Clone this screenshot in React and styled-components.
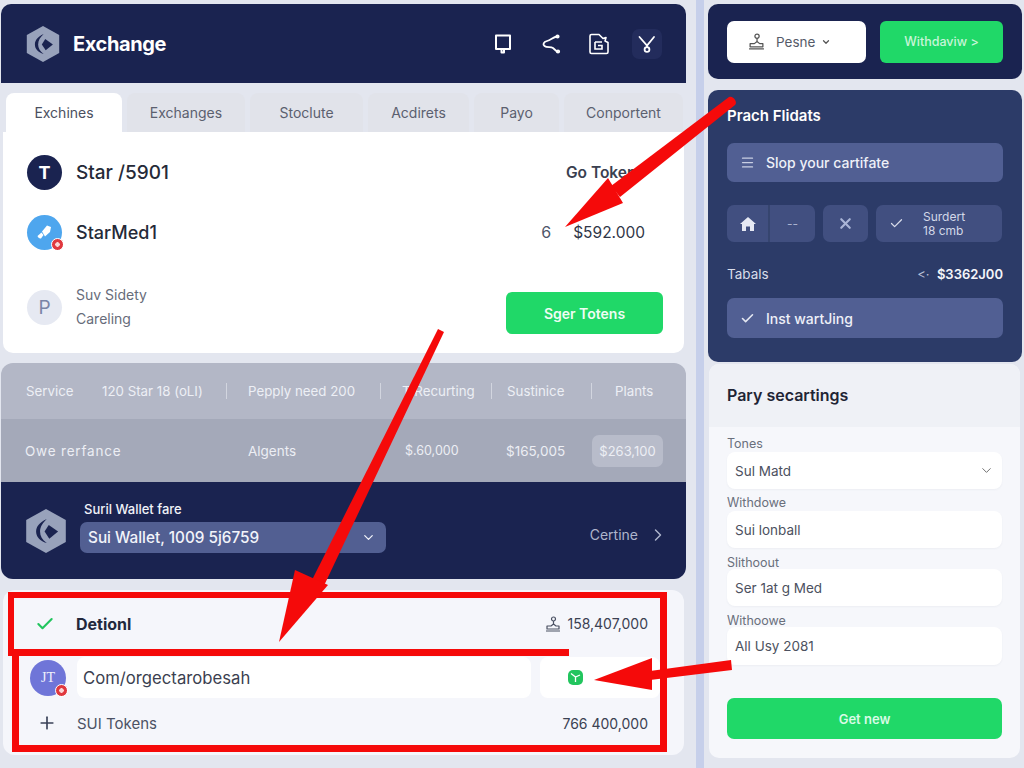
import styled, { createGlobalStyle } from "styled-components";
import { Check, ChevronDown, ChevronRight, Plus, X, Menu } from "lucide-react";

const GlobalStyle = createGlobalStyle`
  html, body { margin: 0; padding: 0; }
  body { background: #e3e6ef; font-family: Inter, "Liberation Sans", sans-serif; overflow: hidden; }
  * { box-sizing: border-box; }
`;

const tabs = [
  { label: "Exchines", width: 116, active: true },
  { label: "Exchanges", width: 118 },
  { label: "Stoclute", width: 113 },
  { label: "Acdirets", width: 101 },
  { label: "Payo", width: 85 },
  { label: "Conportent", width: 119 },
];

const fields = [
  { label: "Tones", value: "Sul Matd", height: 37, select: true },
  { label: "Withdowe", value: "Sui lonball", height: 37 },
  { label: "Slithoout", value: "Ser 1at g Med", height: 37 },
  { label: "Withoowe", value: "All Usy 2081", height: 38 },
];

function HexLogo({ size }) {
  return (
    <svg width={size} height={size} viewBox="0 0 40 40">
      <path d="M20 0 38 10V30L20 40 2 30V10Z" fill="#98a2bb" />
      <path d="M20.700 9C14 12 11 16 11 20.500S14 29 20.700 31C16.500 28 14.600 24.500 14.600 20.500 14.600 16 17 12.500 20.700 9Z" fill="#1a2350" />
      <path d="M22.500 14.500 31 20.500 23 27 18.700 20.500Z" fill="#1a2350" />
    </svg>
  );
}

function StampIcon({ size, color }) {
  return (
    <svg width={size} height={size} viewBox="0 0 16 16" fill="none" stroke={color} strokeWidth="1.200">
      <circle cx="8.500" cy="3" r="2" />
      <path d="M8.500 5V8M2 13V10H6L8.500 8 11 10H14V13ZM1 15H15" strokeLinejoin="round" />
    </svg>
  );
}

function Annotations() {
  return (
    <Overlay viewBox="0 0 1024 768">
      <g fill="#f50a0a">
        <path d="M8 592H667V752H12V656H8ZM14 598V649H569V656H19V745H660V598Z" fillRule="evenodd" />
        <path d="M729 97C733 95 738 102 735 105L620 197 611 186Z" />
        <path d="M608 178 565 227 623 203Z" />
        <path d="M438 329 444 332 321 592 309 586Z" />
        <path d="M295 570 279 642 328 585Z" />
        <path d="M731 660 732 670 650 680 650 671Z" />
        <path d="M652 658 594 680 652 690Z" />
      </g>
    </Overlay>
  );
}

export default function App() {
  return (
    <Page>
      <GlobalStyle />
      <LeftColumn>
        <Header>
          <Brand>
            <HexLogo size={36} />
            <BrandName>Exchange</BrandName>
          </Brand>
          <HeaderIcons>
            <HeaderIcon>
              <svg width="18" height="20" viewBox="0 0 18 20" fill="none" stroke="#fff" strokeWidth="2">
                <path d="M2 1.500H16V15H2ZM7.500 15V18.500H10V15" strokeLinejoin="round" />
              </svg>
            </HeaderIcon>
            <HeaderIcon>
              <svg width="20" height="20" viewBox="0 0 20 20" fill="none" stroke="#fff" strokeWidth="1.800">
                <path d="M16 2.500C12 3 10 6 6 7 2.500 8 1.500 10.500 3.500 12 6 14 9.500 12.500 12 14L16.500 18" strokeLinecap="round" />
                <circle cx="16.500" cy="2.500" r="1.200" />
                <circle cx="17" cy="17.500" r="1.200" />
              </svg>
            </HeaderIcon>
            <HeaderIcon>
              <svg width="22" height="22" viewBox="0 0 22 22" fill="none" stroke="#fff" strokeWidth="1.600">
                <path d="M2 3C2 2 2.500 1.500 3.500 1.500H11L15 5.500 18 4.500 17 8 20 9.500V19C20 20 19.500 20.500 18.500 20.500H3.500C2.500 20.500 2 20 2 19Z" strokeLinejoin="round" />
                <path d="M7 9H14M7 9V16H14V12.500H10" />
              </svg>
            </HeaderIcon>
            <HeaderIconBox>
              <svg width="18" height="18" viewBox="0 0 18 18" fill="none" stroke="#fff" strokeWidth="1.800">
                <path d="M1.500 2 9 10.500 16 2M9 10.500V12" strokeLinecap="round" />
                <circle cx="9" cy="14.500" r="2.400" />
              </svg>
            </HeaderIconBox>
          </HeaderIcons>
        </Header>

        <Tabs>
          {tabs.map((tab) => (
            <Tab key={tab.label} $width={tab.width} $active={tab.active}>{tab.label}</Tab>
          ))}
        </Tabs>

        <MainCard>
          <TokenRow>
            <TokenLeft>
              <Avatar $bg="#1a2350" $color="#fff">T</Avatar>
              <TokenName>Star /5901</TokenName>
            </TokenLeft>
            <GoTokens>Go Tokens</GoTokens>
          </TokenRow>
          <TokenRow>
            <TokenLeft>
              <Avatar $bg="#4ea6ee" $color="#fff">
                <svg width="20" height="20" viewBox="0 0 20 20" fill="#fff">
                  <path d="M2.500 14 6.500 10.500 8.500 13 6 16.500C4.500 17 3 15.500 2.500 14ZM7 9.500 12 3.500 16 5 15 10 10 14.500Z" />
                </svg>
                <Badge />
              </Avatar>
              <TokenName $size={18}>StarMed1</TokenName>
            </TokenLeft>
            <Amount>
              <AmountCount>6</AmountCount>
              <AmountValue>$592.000</AmountValue>
            </Amount>
          </TokenRow>
          <FooterRow>
            <FooterLeft>
              <Avatar $bg="#e6e9f2" $color="#7a84a6" $light>P</Avatar>
              <StackedText>
                <span>Suv Sidety</span>
                <span>Careling</span>
              </StackedText>
            </FooterLeft>
            <GreenButton $width={157} $height={42}>Sger Totens</GreenButton>
          </FooterRow>
        </MainCard>

        <Summary>
          <ServiceRow>
            <span>Service</span>
            <span>120 Star 18 (oLI)</span>
            <Separator />
            <span>Pepply need 200</span>
            <Separator />
            <span>T Recurting</span>
            <Separator />
            <span>Sustinice</span>
            <Separator />
            <span>Plants</span>
          </ServiceRow>
          <PriceRow>
            <span>Owe rerfance</span>
            <span>Algents</span>
            <span>$.60,000</span>
            <span>$165,005</span>
            <PricePill>$263,100</PricePill>
          </PriceRow>
          <WalletRow>
            <HexLogo size={44} />
            <WalletInfo>
              <WalletLabel>Suril Wallet fare</WalletLabel>
              <WalletSelect>
                <span>Sui Wallet, 1009 5j6759</span>
                <ChevronDown size={15} strokeWidth={2} />
              </WalletSelect>
            </WalletInfo>
            <Continue>
              <span>Certine</span>
              <ChevronRight size={20} strokeWidth={1.700} />
            </Continue>
          </WalletRow>
        </Summary>

        <DetailCard>
          <DetailRow>
            <DetailName>
              <Check size={20} color="#22c55e" strokeWidth={2.500} />
              <strong>Detionl</strong>
            </DetailName>
            <DetailValue>
              <StampIcon size={16} color="#4b5163" />
              <span>158,407,000</span>
            </DetailValue>
          </DetailRow>
          <InputRow>
            <SmallAvatar>
              JT
              <Badge />
            </SmallAvatar>
            <PathField>Com/orgectarobesah</PathField>
            <IconField>
              <svg width="15" height="15" viewBox="0 0 15 15">
                <rect width="15" height="15" rx="5" fill="#22c55e" />
                <path d="M3 3.500 7.500 7 12 5M7.500 7V12" stroke="#fff" strokeWidth="1.300" fill="none" />
              </svg>
            </IconField>
          </InputRow>
          <TotalRow>
            <TotalName>
              <Plus size={20} strokeWidth={2} color="#3a4258" />
              <span>SUI Tokens</span>
            </TotalName>
            <DetailValue>766 400,000</DetailValue>
          </TotalRow>
        </DetailCard>
      </LeftColumn>

      <Divider />

      <RightColumn>
        <ActionCard>
          <PersonButton>
            <StampIcon size={17} color="#555" />
            <span>Pesne</span>
            <ChevronDown size={10} strokeWidth={3} color="#555" />
          </PersonButton>
          <GreenButton $width={123} $height={42} $muted>Withdaviw &gt;</GreenButton>
        </ActionCard>

        <FilterPanel>
          <PanelTitle>Prach Flidats</PanelTitle>
          <PanelBar $height={39}>
            <Menu size={15} color="#c9cfe4" />
            <span>Slop your cartifate</span>
          </PanelBar>
          <ControlRow>
            <SplitControl>
              <SplitPart $width={41}>
                <svg width="16" height="16" viewBox="0 0 16 16" fill="#e6e9f3">
                  <path d="M8 1 16 8H14V15H10V10.500H6V15H2V8H0Z" />
                </svg>
              </SplitPart>
              <SplitPart $width={47} $divided>--</SplitPart>
            </SplitControl>
            <ControlBox $width={45}><X size={17} color="#aab5d6" strokeWidth={3} /></ControlBox>
            <ControlBox $width={126}>
              <Check size={15} color="#d8dcea" />
              <ControlText>
                <span>Surdert</span>
                <span>18 cmb</span>
              </ControlText>
            </ControlBox>
          </ControlRow>
          <TotalsRow>
            <TotalsLabel>Tabals</TotalsLabel>
            <TotalsValue><em>&lt;·</em> $3362J00</TotalsValue>
          </TotalsRow>
          <PanelBar $height={40}>
            <Check size={15} color="#e5e8f2" strokeWidth={2.500} />
            <span>Inst wartJing</span>
          </PanelBar>
        </FilterPanel>

        <SettingsPanel>
          <SettingsHead>Pary secartings</SettingsHead>
          <SettingsBody>
            {fields.map((field) => (
              <Field key={field.label}>
                <FieldLabel>{field.label}</FieldLabel>
                <FieldBox $height={field.height}>
                  <span>{field.value}</span>
                  {field.select && <ChevronDown size={15} strokeWidth={1.500} color="#666" />}
                </FieldBox>
              </Field>
            ))}
            <SubmitButton>Get new</SubmitButton>
          </SettingsBody>
        </SettingsPanel>
      </RightColumn>

      <Annotations />
    </Page>
  );
}

const Page = styled.div`
  position: relative;
  display: flex;
  width: 1024px;
  height: 768px;
  overflow: hidden;
  background: #e3e6ef;
`;

const Overlay = styled.svg`
  position: absolute;
  inset: 0;
  width: 1024px;
  height: 768px;
  pointer-events: none;
`;

const LeftColumn = styled.div`
  display: flex;
  flex-direction: column;
  width: 685px;
  margin-left: 1px;
  padding-top: 4px;
`;

const Divider = styled.div`
  width: 8px;
  height: 768px;
  margin-left: 10px;
  background: #c6cfea;
`;

const RightColumn = styled.div`
  display: flex;
  flex-direction: column;
  width: 314px;
  margin-left: 4px;
  padding-top: 4px;
`;

const Header = styled.header`
  display: flex;
  align-items: center;
  justify-content: space-between;
  height: 79px;
  padding: 0 24px;
  background: #1a2350;
  border-radius: 10px 10px 0 0;
`;

const Brand = styled.div`
  display: flex;
  align-items: center;
  gap: 12px;
`;

const BrandName = styled.div`
  color: #fff;
  font-size: 20px;
  font-weight: 700;
  letter-spacing: -0.4px;
`;

const HeaderIcons = styled.div`
  display: flex;
  align-items: center;
  gap: 18px;
`;

const HeaderIcon = styled.div`
  display: flex;
  align-items: center;
  justify-content: center;
  width: 30px;
  height: 30px;
`;

const HeaderIconBox = styled(HeaderIcon)`
  background: #232c5c;
  border-radius: 7px;
`;

const Tabs = styled.nav`
  display: flex;
  gap: 5px;
  margin: 10px 0 0 5px;
`;

const Tab = styled.div`
  display: flex;
  align-items: center;
  justify-content: center;
  width: ${(p) => p.$width}px;
  height: 39px;
  padding-bottom: 1px;
  font-size: 14px;
  color: ${(p) => (p.$active ? "#4b5060" : "#5b606f")};
  background: ${(p) => (p.$active ? "#fff" : "#e1e3ea")};
  border-radius: 8px 8px 0 0;
`;

const MainCard = styled.section`
  display: flex;
  flex-direction: column;
  height: 221px;
  margin: 0 2px;
  background: #fff;
  border-radius: 0 0 10px 10px;
`;

const TokenRow = styled.div`
  display: flex;
  align-items: center;
  justify-content: space-between;
  height: 42px;
  padding: 0 39px 0 24px;

  &:first-child {
    height: 79px;
    padding-top: 2px;
  }
`;

const TokenLeft = styled.div`
  display: flex;
  align-items: center;
  gap: 14px;
`;

const FooterLeft = styled(TokenLeft)`
  margin-bottom: 12px;
`;

const Avatar = styled.div`
  position: relative;
  display: flex;
  align-items: center;
  justify-content: center;
  flex: none;
  width: 35px;
  height: 35px;
  font-size: ${(p) => (p.$light ? 19 : 18)}px;
  font-weight: ${(p) => (p.$light ? 400 : 700)};
  color: ${(p) => p.$color};
  background: ${(p) => p.$bg};
  border-radius: 50%;
`;

const Badge = styled.i`
  position: absolute;
  right: -2px;
  bottom: -1px;
  width: 13px;
  height: 13px;
  background: radial-gradient(circle, #fbd5d5 0 2px, #e0383e 2.500px);
  border: 1.500px solid #fff;
  border-radius: 50%;
`;

const TokenName = styled.div`
  font-size: ${(p) => p.$size || 19}px;
  font-weight: 500;
  color: #252a38;
`;

const GoTokens = styled.div`
  font-size: 15.500px;
  font-weight: 600;
  color: #3a4050;
`;

const Amount = styled.div`
  display: flex;
  align-items: center;
  gap: 22px;
`;

const AmountCount = styled.span`
  font-size: 16px;
  color: #50566a;
`;

const AmountValue = styled.span`
  font-size: 15.500px;
  color: #303647;
`;

const FooterRow = styled.div`
  display: flex;
  align-items: center;
  justify-content: space-between;
  padding: 33px 21px 0 24px;
`;

const StackedText = styled.div`
  display: flex;
  flex-direction: column;
  gap: 6px;
  font-size: 14px;
  line-height: 18px;
  color: #676c7a;
`;

const GreenButton = styled.button`
  width: ${(p) => p.$width}px;
  height: ${(p) => p.$height}px;
  font-family: inherit;
  font-size: ${(p) => (p.$muted ? 12.500 : 14)}px;
  font-weight: ${(p) => (p.$muted ? 500 : 600)};
  color: ${(p) => (p.$muted ? "#c8f5d8" : "#eefdf3")};
  background: #20d868;
  border: 0;
  border-radius: 6px;
`;

const Summary = styled.section`
  margin-top: 10px;
  overflow: hidden;
  border-radius: 12px;
`;

const ServiceRow = styled.div`
  display: grid;
  grid-template-columns: 76px 124px 22px 132px 22px 89px 16px 84px 24px auto;
  align-items: center;
  height: 56px;
  padding-left: 25px;
  font-size: 13.300px;
  color: #edeff5;
  background: #b3b7c6;
`;

const Separator = styled.i`
  width: 1px;
  height: 16px;
  background: #d2d5df;
`;

const PriceRow = styled.div`
  display: grid;
  grid-template-columns: 223px 157px 101px 86px 71px;
  align-items: center;
  height: 63px;
  padding-left: 24px;
  font-size: 13.500px;
  color: #eceef4;
  background: #a4a9b9;

  span:first-child {
    letter-spacing: 0.800px;
  }

  span:nth-child(3) {
    font-size: 12.500px;
  }
`;

const PricePill = styled.span`
  display: flex;
  align-items: center;
  justify-content: center;
  height: 32px;
  font-size: 13px;
  background: #b8bcca;
  border-radius: 7px;
`;

const WalletRow = styled.div`
  display: flex;
  align-items: center;
  height: 97px;
  padding: 0 18px 0 23px;
  background: #1a2350;
`;

const WalletInfo = styled.div`
  display: flex;
  flex-direction: column;
  gap: 5px;
  margin: -8px 0 0 12px;
`;

const WalletLabel = styled.div`
  margin-left: 4px;
  font-size: 13px;
  font-weight: 500;
  color: #f0f2f8;
`;

const WalletSelect = styled.div`
  display: flex;
  align-items: center;
  justify-content: space-between;
  width: 306px;
  height: 31px;
  padding: 0 10px 0 8px;
  font-size: 15.300px;
  font-weight: 500;
  color: #f2f4fa;
  background: #525f92;
  border-radius: 7px;
`;

const Continue = styled.div`
  display: flex;
  align-items: center;
  gap: 10px;
  margin: 8px 0 0 auto;
  font-size: 14px;
  color: #aeb5cc;
`;

const DetailCard = styled.section`
  display: flex;
  flex-direction: column;
  height: 165px;
  margin: 11px 2px 0;
  padding: 0 36px 0 27px;
  background: #f5f6fb;
  border-radius: 12px;
`;

const DetailRow = styled.div`
  display: flex;
  align-items: center;
  justify-content: space-between;
  height: 67px;
`;

const DetailName = styled.div`
  display: flex;
  align-items: center;
  gap: 21px;
  margin-left: 5px;
  font-size: 16px;
  color: #22283c;
`;

const DetailValue = styled.div`
  display: flex;
  align-items: center;
  gap: 6px;
  font-size: 14px;
  color: #3b4152;
`;

const InputRow = styled.div`
  display: flex;
  align-items: center;
  height: 41px;
`;

const SmallAvatar = styled.div`
  position: relative;
  display: flex;
  align-items: center;
  justify-content: center;
  flex: none;
  width: 36px;
  height: 36px;
  font-family: "Liberation Serif", serif;
  font-size: 14px;
  color: #f0f1fc;
  background: #6f75d8;
  border-radius: 50%;
`;

const PathField = styled.div`
  display: flex;
  align-items: center;
  flex: none;
  width: 454px;
  height: 41px;
  margin-left: 11px;
  padding-left: 6px;
  font-size: 16.700px;
  color: #3b3f50;
  background: #fff;
  border-radius: 8px;
`;

const IconField = styled.div`
  display: flex;
  align-items: center;
  flex: none;
  width: 120px;
  height: 41px;
  margin-left: 9px;
  padding-left: 28px;
  background: #fff;
  border-radius: 8px;
`;

const TotalRow = styled.div`
  display: flex;
  align-items: center;
  justify-content: space-between;
  height: 50px;
`;

const TotalName = styled.div`
  display: flex;
  align-items: center;
  gap: 20px;
  margin-left: 7px;
  font-size: 15px;
  color: #4c5264;
`;

const ActionCard = styled.section`
  display: flex;
  align-items: center;
  gap: 14px;
  height: 75px;
  padding: 0 19px;
  background: #1a2350;
  border-radius: 10px;
`;

const PersonButton = styled.div`
  display: flex;
  align-items: center;
  gap: 11px;
  width: 139px;
  height: 42px;
  padding-left: 21px;
  font-size: 13.500px;
  color: #555a68;
  background: #fff;
  border-radius: 7px;

  svg:last-child {
    margin-left: -5px;
  }
`;

const FilterPanel = styled.section`
  display: flex;
  flex-direction: column;
  height: 272px;
  margin-top: 11px;
  padding: 17px 19px 0;
  background: #2c3b68;
  border-radius: 10px;
`;

const PanelTitle = styled.h2`
  margin: 0 0 18px;
  font-size: 15px;
  line-height: 18px;
  font-weight: 600;
  color: #fff;
`;

const PanelBar = styled.div`
  display: flex;
  align-items: center;
  gap: 11px;
  height: ${(p) => p.$height}px;
  padding: 0 13px;
  font-size: 14px;
  font-weight: 500;
  color: #eef0f8;
  background: #515f93;
  border-radius: 7px;
`;

const ControlRow = styled.div`
  display: flex;
  gap: 8px;
  margin-top: 23px;
`;

const SplitControl = styled.div`
  display: flex;
  height: 37px;
  overflow: hidden;
  background: #414f80;
  border-radius: 7px;
`;

const SplitPart = styled.div`
  display: flex;
  align-items: center;
  justify-content: center;
  width: ${(p) => p.$width}px;
  font-size: 12px;
  color: #aab2cf;
  border-left: ${(p) => (p.$divided ? "2px solid #36456f" : "0")};
`;

const ControlBox = styled.div`
  display: flex;
  align-items: center;
  justify-content: ${(p) => (p.$width > 60 ? "flex-start" : "center")};
  gap: 19px;
  width: ${(p) => p.$width}px;
  height: 37px;
  padding: ${(p) => (p.$width > 60 ? "0 0 0 13px" : "0")};
  background: #414f80;
  border-radius: 7px;
`;

const ControlText = styled.div`
  display: flex;
  flex-direction: column;
  font-size: 12px;
  line-height: 14px;
  color: #d3d8e8;
`;

const TotalsRow = styled.div`
  display: flex;
  align-items: center;
  justify-content: space-between;
  height: 24px;
  margin: 20px 0 12px;
`;

const TotalsLabel = styled.span`
  font-size: 13.500px;
  color: #d9ddea;
`;

const TotalsValue = styled.span`
  font-size: 13px;
  font-weight: 600;
  color: #f4f5fa;

  em {
    margin-right: 4px;
    font-style: normal;
    font-weight: 400;
    color: #b8bfd6;
  }
`;

const SettingsPanel = styled.section`
  display: flex;
  flex-direction: column;
  flex: 1;
  margin: 2px 2px 10px 1px;
  overflow: hidden;
  background: #f6f7fb;
  border-radius: 10px;
`;

const SettingsHead = styled.h2`
  display: flex;
  align-items: center;
  flex: none;
  height: 63px;
  margin: 0;
  padding: 0 18px 1px;
  font-size: 16px;
  font-weight: 600;
  color: #1f2535;
  background: #eff1f6;
`;

const SettingsBody = styled.div`
  display: flex;
  flex-direction: column;
  padding: 9px 18px 0;
`;

const FieldLabel = styled.label`
  height: 16px;
  font-size: 12.500px;
  line-height: 16px;
  color: #6a6f7c;
`;

const Field = styled.div`
  display: flex;
  flex-direction: column;
  margin-bottom: 5px;

  &:first-child {
    margin-bottom: 6px;
  }

  &:nth-child(n + 3) ${FieldLabel} {
    height: 14px;
    margin-top: 2px;
  }
`;

const FieldBox = styled.div`
  display: flex;
  align-items: center;
  justify-content: space-between;
  height: ${(p) => p.$height}px;
  padding: 0 8px;
  font-size: 13.500px;
  color: #4c5160;
  background: #fff;
  border-radius: 8px;
  box-shadow: 0 1px 2px rgba(60, 70, 100, 0.05);
`;

const SubmitButton = styled.button`
  height: 41px;
  margin-top: 28px;
  font-family: inherit;
  font-size: 13px;
  font-weight: 600;
  color: #d9fbe6;
  background: #20d868;
  border: 0;
  border-radius: 7px;
`;
